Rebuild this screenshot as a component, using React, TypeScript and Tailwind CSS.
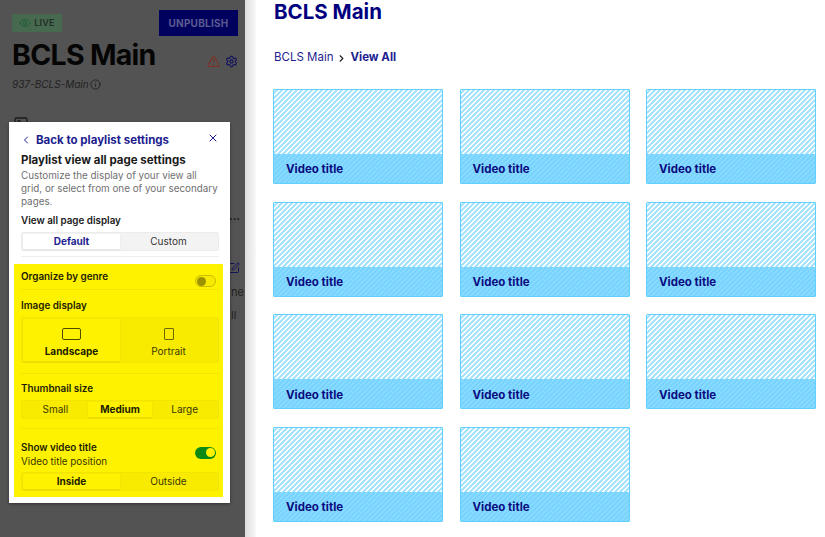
import { Settings, Eye, Info, TriangleAlert, ChevronLeft, ChevronRight, X, SquarePen, Image } from "lucide-react";

const FONT = "[font-family:Inter,'Liberation_Sans',sans-serif]";

function Segmented({
  items,
  active,
  yellow = false,
}: {
  items: string[];
  active: string;
  yellow?: boolean;
}) {
  return (
    <div
      className={`flex h-[19px] rounded-[2px] border p-[1px] ${
        yellow ? "border-[#f2e500] bg-[#f8eb00]" : "border-[#ececec] bg-[#f3f3f3]"
      }`}
    >
      {items.map((item) => (
        <div
          key={item}
          className={`flex flex-1 items-center justify-center rounded-[1px] text-[10px] ${
            item === active
              ? yellow
                ? "bg-[#fff200] font-bold text-[#1c1c00] shadow-[0_1px_2px_rgba(0,0,0,0.08)]"
                : "bg-white font-bold text-[#1d1d8f] shadow-[0_1px_2px_rgba(0,0,0,0.08)]"
              : yellow
                ? "text-[#3a3700]"
                : "text-[#333]"
          }`}
        >
          {item}
        </div>
      ))}
    </div>
  );
}

function Toggle({ on }: { on: boolean }) {
  return (
    <div
      className={`flex h-[12px] w-[21px] items-center rounded-full px-[1px] ${
        on ? "justify-end bg-[#0b8a13]" : "border border-[#c9bd00] bg-[#f7ea00]"
      }`}
    >
      <div className={`h-[9px] w-[9px] rounded-full ${on ? "bg-[#fff200]" : "bg-[#9c9200]"}`} />
    </div>
  );
}

function SettingsModal() {
  return (
    <div className="absolute left-[9px] top-[122px] h-[381px] w-[221px] bg-white pl-[5px] pr-[7px] pt-[10px] shadow-[0_1px_3px_rgba(0,0,0,0.4)]">
      <div className="flex items-center justify-between pl-[6px] pr-[4px]">
        <div className="flex items-center gap-[4px] text-[11.5px] font-bold leading-[16px] text-[#1d1d8f]">
          <ChevronLeft size={12} strokeWidth={2} />
          Back to playlist settings
        </div>
        <X size={12} strokeWidth={2} className="-translate-y-[2px] text-[#1d1d8f]" />
      </div>

      <div className="pl-[7px] pr-[4px] pt-[4px]">
        <div className="text-[11.5px] font-bold leading-[16px] text-[#1a1a1a]">Playlist view all page settings</div>
        <p className="-mr-[4px] mt-[1px] text-[9.85px] leading-[13px] text-[#6f6f6f]">
          Customize the display of your view all
          <br />
          grid, or select from one of your secondary pages.
        </p>
        <div className="pb-[5px] pt-[5px] text-[9.85px] font-semibold leading-[14px] text-[#1a1a1a]">
          View all page display
        </div>
        <Segmented items={["Default", "Custom"]} active="Default" />
        <div className="mt-[5px] h-px bg-[#eeeeee]" />
      </div>

      <div className="mt-[7px] h-[233px] bg-[#fff200] pl-[7px] pr-[4px] pt-[6px] text-[#1c1c00]">
        <div className="flex h-[20px] justify-between border-b border-[#f2e500] pr-[3px]">
          <span className="text-[9.85px] font-semibold leading-[13px]">Organize by genre</span>
          <div className="pt-[5px]">
            <Toggle on={false} />
          </div>
        </div>

        <div className="pb-[5px] pt-[8px] text-[9.85px] font-semibold leading-[14px]">Image display</div>
        <div className="flex h-[46px] rounded-[2px] border border-[#f2e500] bg-[#f8eb00] p-[1px]">
          <div className="flex flex-1 flex-col items-center gap-[4px] bg-[#fff200] pt-[9px] shadow-[0_1px_2px_rgba(0,0,0,0.08)]">
            <div className="h-[12px] w-[19px] rounded-[2px] border-[1.5px] border-[#4f4a00]" />
            <span className="text-[10px] font-bold leading-[14px]">Landscape</span>
          </div>
          <div className="flex flex-1 flex-col items-center gap-[4px] pt-[9px] text-[#3a3700]">
            <div className="h-[12px] w-[10px] rounded-[1px] border-[1.5px] border-[#6d6700]" />
            <span className="text-[10px] leading-[14px]">Portrait</span>
          </div>
        </div>
        <div className="mt-[10px] h-px bg-[#f2e500]" />

        <div className="pb-[5px] pt-[7px] text-[9.85px] font-semibold leading-[14px]">Thumbnail size</div>
        <Segmented items={["Small", "Medium", "Large"]} active="Medium" yellow />
        <div className="mt-[9px] h-px bg-[#f2e500]" />

        <div className="flex items-center justify-between pr-[3px] pt-[11px]">
          <div>
            <div className="text-[9.85px] font-semibold leading-[14px]">Show video title</div>
            <div className="text-[9.85px] leading-[14px] text-[#3a3700]">Video title position</div>
          </div>
          <div className="mb-[3px]">
            <Toggle on />
          </div>
        </div>
        <div className="mt-[4px]">
          <Segmented items={["Inside", "Outside"]} active="Inside" yellow />
        </div>
      </div>
    </div>
  );
}

function LeftPanel() {
  return (
    <div className="relative h-full w-[245px] shrink-0 overflow-hidden bg-[#535353] pl-[12px] pr-[7px] pt-[10px]">
      <div className="flex items-start justify-between">
        <div className="mt-[4px] flex h-[18px] w-[50px] items-center justify-center gap-[3px] bg-[#47694f] text-[9px] font-semibold tracking-wide text-[#222e26]">
          <Eye size={12} className="text-[#1f5f36]" />
          LIVE
        </div>
        <div className="flex h-[26px] w-[79px] items-center justify-center bg-[#00005f] text-[10px] font-bold tracking-wide text-[#5c5c90]">
          UNPUBLISH
        </div>
      </div>
      <div className="flex items-end justify-between">
        <h1 className="text-[28.5px] font-bold leading-[38px] tracking-tight text-[#050505]">BCLS Main</h1>
        <div className="mb-[6px] flex items-center gap-[5px]">
          <TriangleAlert size={13} className="text-[#803022]" />
          <Settings size={13} className="text-[#12125f]" />
        </div>
      </div>
      <div className="mt-[3px] flex items-center gap-[1px] text-[10px] italic text-[#222]">
        937-BCLS-Main
        <Info size={11} className="text-[#222]" />
      </div>
      <Image size={16} className="ml-[1px] mt-[24px] text-[#1b1b1b]" />
      <div className="absolute left-[229px] top-[210px] text-[11px] font-bold leading-[12px] text-[#111]">...</div>
      <SquarePen size={12} className="absolute left-[228px] top-[262px] text-[#12125f]" />
      <div className="absolute left-[231px] top-[284px] text-[11px] text-[#222]">ne</div>
      <div className="absolute left-[231px] top-[307px] text-[11px] text-[#222]">ll</div>
      <SettingsModal />
    </div>
  );
}

function VideoCard() {
  return (
    <div className="flex h-[95px] flex-col rounded-[1px] border border-[#62d0ff] bg-[linear-gradient(135deg,#ffffff_20%,#a8e4ff_20%,#a8e4ff_50%,#ffffff_50%,#ffffff_70%,#a8e4ff_70%)] bg-[length:5px_5px]">
      <div className="flex-1" />
      <div className="flex h-[29px] items-center bg-[linear-gradient(135deg,#78d4ff_25%,#8adbff_25%,#8adbff_50%,#78d4ff_50%,#78d4ff_75%,#8adbff_75%)] bg-[length:5px_5px] pl-[12px] pt-[3px] text-[11.5px] font-bold text-[#0b0b80]">
        Video title
      </div>
    </div>
  );
}

export default function App() {
  return (
    <div className={`flex h-[537px] w-[825px] overflow-hidden bg-white ${FONT}`}>
      <LeftPanel />
      <div className="h-full w-[11px] shrink-0 bg-gradient-to-r from-[#dddddd] to-[#f8f8f8]" />
      <main className="flex-1 pl-[18px] pr-[9px]">
        <h1 className="text-[20.5px] font-bold leading-[24px] text-[#00007f]">BCLS Main</h1>
        <nav className="mt-[24px] flex h-[20px] items-center gap-[3px] text-[11.5px] text-[#1d1d8f]">
          BCLS Main
          <ChevronRight size={11} strokeWidth={2.5} className="text-[#222]" />
          <span className="font-bold">View All</span>
        </nav>
        <div className="-ml-[1px] mt-[21px] grid grid-cols-3 gap-x-[16.5px] gap-y-[17.6px]">
          {Array.from({ length: 11 }).map((_, i) => (
            <VideoCard key={i} />
          ))}
        </div>
      </main>
    </div>
  );
}
